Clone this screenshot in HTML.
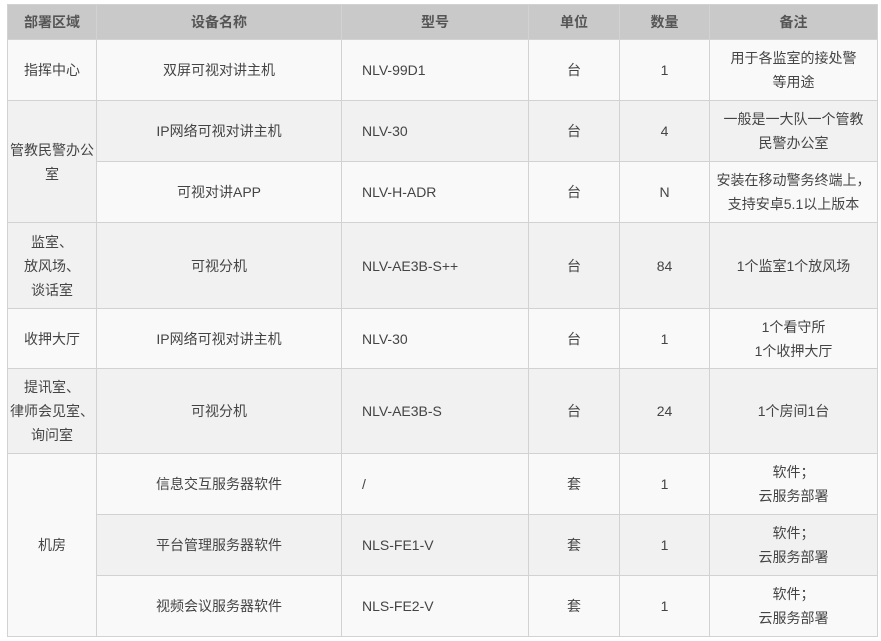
<!DOCTYPE html>
<html><head><meta charset="utf-8"><style>
html,body{margin:0;padding:0;background:#fff;width:881px;height:641px;overflow:hidden}
table{position:absolute;left:7px;top:4px;border-collapse:collapse;table-layout:fixed;font-family:"Liberation Sans","Noto Sans CJK SC",sans-serif;font-size:14px;color:#444}
td,th{border:1px solid #d2d2d2;text-align:center;padding:0;line-height:24px;overflow:hidden}
th{background:#c9c9c9;color:#555;font-weight:bold;height:34px}
tr.a td{background:#f9f9f9}
tr.b td{background:#f1f1f1}
td.l{text-align:left;padding-left:20px}
</style></head><body>
<table>
<colgroup><col style="width:89px"><col style="width:245px"><col style="width:187px"><col style="width:91px"><col style="width:90px"><col style="width:168px"></colgroup>
<tr><th>部署区域</th><th>设备名称</th><th>型号</th><th>单位</th><th>数量</th><th>备注</th></tr>
<tr class="a" style="height:61px"><td>指挥中心</td><td>双屏可视对讲主机</td><td class="l">NLV-99D1</td><td>台</td><td>1</td><td>用于各监室的接处警<br>等用途</td></tr>
<tr class="b" style="height:61px"><td rowspan="2">管教民警办公<br>室</td><td>IP网络可视对讲主机</td><td class="l">NLV-30</td><td>台</td><td>4</td><td>一般是一大队一个管教<br>民警办公室</td></tr>
<tr class="a" style="height:61px"><td>可视对讲APP</td><td class="l">NLV-H-ADR</td><td>台</td><td>N</td><td style="white-space:nowrap">安装在移动警务终端上，<br>支持安卓5.1以上版本</td></tr>
<tr class="b" style="height:86px"><td>监室、<br>放风场、<br>谈话室</td><td>可视分机</td><td class="l">NLV-AE3B-S++</td><td>台</td><td>84</td><td>1个监室1个放风场</td></tr>
<tr class="a" style="height:60px"><td>收押大厅</td><td>IP网络可视对讲主机</td><td class="l">NLV-30</td><td>台</td><td>1</td><td>1个看守所<br>1个收押大厅</td></tr>
<tr class="b" style="height:85px"><td style="white-space:nowrap">提讯室、<br>律师会见室、<br>询问室</td><td>可视分机</td><td class="l">NLV-AE3B-S</td><td>台</td><td>24</td><td>1个房间1台</td></tr>
<tr class="a" style="height:61px"><td rowspan="3">机房</td><td>信息交互服务器软件</td><td class="l">/</td><td>套</td><td>1</td><td>软件；<br>云服务部署</td></tr>
<tr class="b" style="height:61px"><td>平台管理服务器软件</td><td class="l">NLS-FE1-V</td><td>套</td><td>1</td><td>软件；<br>云服务部署</td></tr>
<tr class="a" style="height:61px"><td>视频会议服务器软件</td><td class="l">NLS-FE2-V</td><td>套</td><td>1</td><td>软件；<br>云服务部署</td></tr>
</table>
</body></html>
